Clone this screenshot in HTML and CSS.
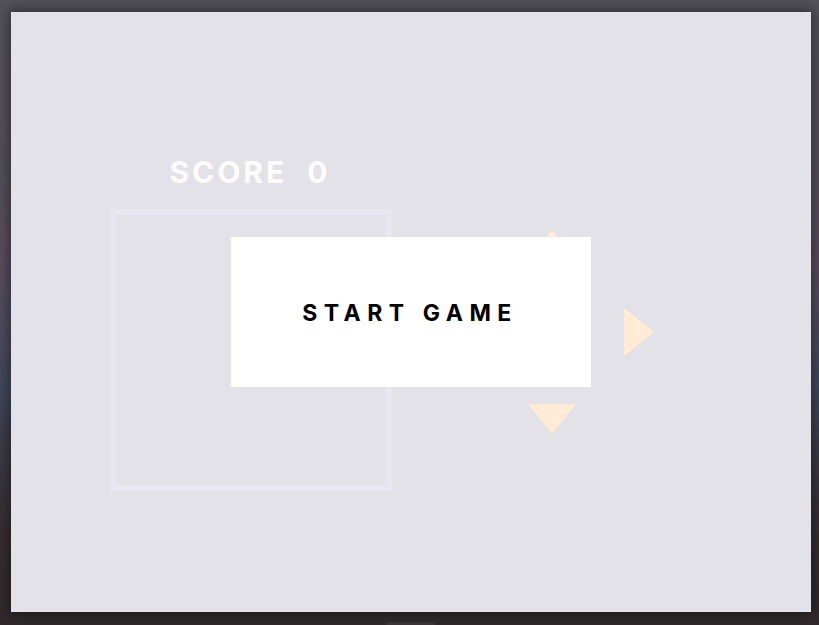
FILE: index.html
```html
<!DOCTYPE html>
<html>
<head>
<meta charset="utf-8">
<link rel="stylesheet" href="styles.css">
</head>
<body>
<main class="stage">
  <div class="score">SCORE 0</div>
  <div class="board"></div>
  <div class="dpad">
    <span class="tri up"></span>
    <span class="tri left"></span>
    <span class="tri right"></span>
    <span class="tri down"></span>
  </div>
  <button class="start">START GAME</button>
</main>
<div class="tab"></div>
</body>
</html>
```
FILE: styles.css
```css
html, body {
  margin: 0;
  height: 625px;
  overflow: hidden;
}
body {
  padding: 12px 0 0 11px;
  box-sizing: border-box;
  background: linear-gradient(to bottom, #535259 0%, #545058 25%, #5a4c5e 42%, #4b4a5e 55%, #41475c 62%, #3a3842 74%, #372d30 86%, #302a2c 100%);
  font-family: Inter, "Noto Sans", sans-serif;
  position: relative;
}
.stage {
  position: relative;
  width: 800px;
  height: 600px;
  background: #e3e2e8;
  box-shadow: 0 0 12px 2px rgba(0, 0, 0, 0.45);
}
.score {
  position: absolute;
  left: 98px;
  top: 145px;
  width: 282px;
  text-align: center;
  font-size: 30px;
  line-height: 31px;
  font-weight: 700;
  letter-spacing: 3px;
  word-spacing: 10px;
  color: #fdfcfa;
}
.board {
  position: absolute;
  left: 99px;
  top: 197px;
  width: 282px;
  height: 282px;
  box-sizing: border-box;
  border: 6px solid #e8e6f1;
}
.dpad {
  position: absolute;
  left: 439px;
  top: 218px;
  width: 204px;
  height: 204px;
}
.tri {
  position: absolute;
  width: 0;
  height: 0;
}
.up {
  left: 78px; top: 0;
  border-left: 24px solid transparent;
  border-right: 24px solid transparent;
  border-bottom: 30px solid #ffebd6;
}
.down {
  left: 78px; bottom: 0;
  border-left: 24px solid transparent;
  border-right: 24px solid transparent;
  border-top: 30px solid #ffebd6;
}
.left {
  left: 0; top: 78px;
  border-top: 24px solid transparent;
  border-bottom: 24px solid transparent;
  border-right: 30px solid #ffebd6;
}
.right {
  right: 0; top: 78px;
  border-top: 24px solid transparent;
  border-bottom: 24px solid transparent;
  border-left: 30px solid #ffebd6;
}
.start {
  position: absolute;
  left: 220px;
  top: 225px;
  width: 360px;
  height: 150px;
  border: 0;
  padding: 2px 2px 0 0;
  margin: 0;
  background: #ffffff;
  color: #000;
  font-family: Inter, "Noto Sans", sans-serif;
  font-size: 23px;
  font-weight: 700;
  letter-spacing: 6.5px;
  display: flex;
  align-items: center;
  justify-content: center;
}
.tab {
  position: absolute;
  left: 386px;
  top: 622px;
  width: 49px;
  height: 6px;
  border-radius: 3px;
  background: #3b3538;
}
```
